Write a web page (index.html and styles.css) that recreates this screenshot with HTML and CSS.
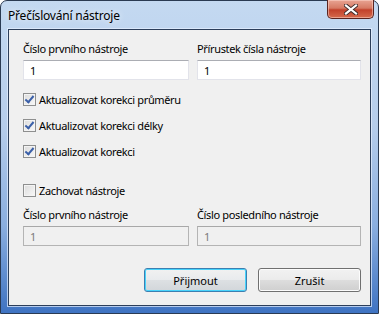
FILE: index.html
```html
<!DOCTYPE html>
<html lang="cs">
<head>
  <meta charset="UTF-8">
  <title>Přečíslování nástroje</title>
  <link rel="stylesheet" href="styles.css">
</head>
<body>
  <div class="window">
    <div class="titlebar">
      <span class="title">Přečíslování nástroje</span>
      <button class="close" title="Zavřít">
        <svg width="14" height="11" viewBox="0 0 14 11">
          <path d="M2 1.5 L12 9.5 M12 1.5 L2 9.5" stroke="#3b2a2a" stroke-width="4" stroke-linecap="square"/>
          <path d="M2 1.5 L12 9.5 M12 1.5 L2 9.5" stroke="#fff" stroke-width="2.2" stroke-linecap="square"/>
        </svg>
      </button>
    </div>

    <div class="client">
      <div class="fields">
        <label class="field">
          <span>Číslo prvního nástroje</span>
          <input type="text" value="1">
        </label>
        <label class="field">
          <span>Přírustek čísla nástroje</span>
          <input type="text" value="1">
        </label>
      </div>

      <div class="checks">
        <label class="check"><span class="box checked"></span>Aktualizovat korekci průměru</label>
        <label class="check"><span class="box checked"></span>Aktualizovat korekci délky</label>
        <label class="check"><span class="box checked"></span>Aktualizovat korekci</label>
      </div>

      <label class="check keep"><span class="box"></span>Zachovat nástroje</label>

      <div class="fields lower">
        <label class="field">
          <span>Číslo prvního nástroje</span>
          <input type="text" value="1" disabled>
        </label>
        <label class="field">
          <span>Číslo posledního nástroje</span>
          <input type="text" value="1" disabled>
        </label>
      </div>

      <div class="actions">
        <button class="btn default">Přijmout</button>
        <button class="btn">Zrušit</button>
      </div>
    </div>
  </div>
</body>
</html>
```

FILE: styles.css
```css
body {
  margin: 0;
  width: 379px;
  height: 314px;
  overflow: hidden;
  background: #fff;
  font-family: "Noto Sans", "Open Sans", sans-serif;
  font-size: 11px;
  letter-spacing: -0.35px;
  color: #000;
}
.window {
  box-sizing: border-box;
  width: 379px;
  height: 314px;
  border: 1px solid #2a3a52;
  border-radius: 7px 7px 0 0;
  background: linear-gradient(#c4d9f1 0%, #b6cdeb 40%, #8aaedf 72%, #3f73c2 100%);
  padding: 0 7px 7px 7px;
  display: flex;
  flex-direction: column;
}
.titlebar {
  height: 28px;
  display: flex;
  justify-content: space-between;
  align-items: flex-start;
}
.title {
  margin-top: 6px;
  font-size: 12px;
  letter-spacing: -0.2px;
  color: #000;
  text-shadow: 0 0 6px rgba(255, 255, 255, 0.9);
}
.close {
  width: 47px;
  height: 19px;
  margin-top: -1px;
  margin-right: -3px;
  border: 1px solid #5a2420;
  border-top: none;
  border-radius: 0 0 5px 5px;
  background: linear-gradient(#e8a493 0%, #d67a64 45%, #c2412b 55%, #d56a4d 100%);
  box-shadow: inset 0 0 0 1px rgba(255, 220, 210, 0.5);
  display: flex;
  align-items: center;
  justify-content: center;
  padding: 0;
}
.client {
  flex: 1;
  background: #f0f0f0;
  border: 1px solid #2c3e5a;
  box-shadow: 0 0 0 1px rgba(230, 240, 255, 0.7);
  padding: 11px 9px 0 14px;
  display: flex;
  flex-direction: column;
}
.fields {
  display: grid;
  grid-template-columns: 166px 164px;
  column-gap: 8px;
}
.field {
  display: flex;
  flex-direction: column;
  gap: 3px;
}
.field span {
  line-height: 16px;
}
.field input {
  box-sizing: border-box;
  height: 20px;
  margin: 0;
  padding: 0 0 0 6px;
  font: inherit;
  color: #000;
  background: #fff;
  border: 1px solid #e2e3ea;
  border-top-color: #abadb3;
}
.field input:disabled {
  background: #f0f0f0;
  color: #7a7a7a;
  border-color: #b4b4b4;
  border-top-color: #a8a8a8;
}
.checks {
  margin-top: 11px;
  display: flex;
  flex-direction: column;
  gap: 10px;
}
.check {
  display: flex;
  align-items: center;
  gap: 3px;
  height: 16px;
}
.box {
  box-sizing: border-box;
  width: 13px;
  height: 13px;
  border: 1px solid #8e8f8f;
  background: linear-gradient(135deg, #dcdcdc, #f8f8f8);
  box-shadow: inset 0 0 0 1px #f4f4f4;
  position: relative;
}
.box.checked::after {
  content: "";
  position: absolute;
  left: 3px;
  top: 0px;
  width: 3px;
  height: 7px;
  border: solid #3a5fa8;
  border-width: 0 2px 2px 0;
  transform: rotate(40deg);
}
.keep {
  margin-top: 23px;
}
.lower {
  margin-top: 9px;
}
.actions {
  margin-top: 22px;
  display: flex;
  justify-content: flex-end;
  gap: 11px;
}
.btn {
  box-sizing: border-box;
  width: 103px;
  height: 24px;
  font: inherit;
  color: #000;
  border: 1px solid #707070;
  border-radius: 3px;
  background: linear-gradient(#f2f2f2 0%, #ebebeb 50%, #dddddd 51%, #cfcfcf 100%);
  box-shadow: inset 0 0 0 1px #fcfcfc;
  padding: 0;
}
.btn.default {
  border-color: #3c7fb1;
  box-shadow: inset 0 0 0 1px #48d3fb;
  background: linear-gradient(#f1f1f1 0%, #e8ebed 50%, #dde0e3 51%, #d2d6da 100%);
}
```
